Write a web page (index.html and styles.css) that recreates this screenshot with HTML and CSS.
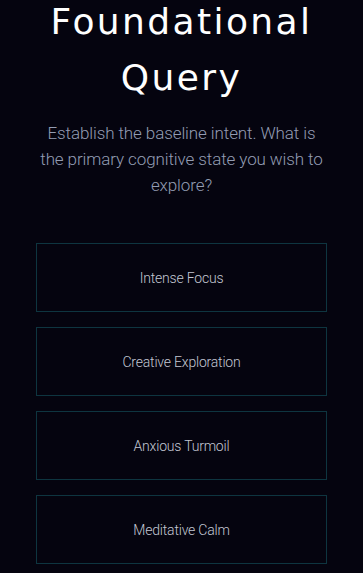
FILE: index.html
```html
<!DOCTYPE html>
<html lang="en">
<head>
  <meta charset="UTF-8">
  <meta name="viewport" content="width=device-width, initial-scale=1.0">
  <title>Foundational Query</title>
  <link rel="stylesheet" href="styles.css">
</head>
<body>
  <div class="query-container">
    <h1 class="query-title">Foundational Query</h1>
    <p class="query-intro">Establish the baseline intent. What is the primary cognitive state you wish to explore?</p>
    <div class="option-list">
      <button class="option-button">Intense Focus</button>
      <button class="option-button">Creative Exploration</button>
      <button class="option-button">Anxious Turmoil</button>
      <button class="option-button">Meditative Calm</button>
    </div>
  </div>
</body>
</html>
```

FILE: styles.css
```css
body {
  margin: 0;
  background-color: #05040f;
  font-family: Roboto, Lato, sans-serif;
  color: #ffffff;
}

.query-container {
  padding: 0 36px;
}

.query-title {
  margin: -6px 0 0;
  font-family: "DejaVu Sans", sans-serif;
  font-weight: normal;
  font-size: 36px;
  letter-spacing: 2.4px;
  line-height: 56px;
  text-align: center;
  color: #ffffff;
}

.query-intro {
  margin: 14px -2px 0;
  font-size: 17px;
  font-weight: 300;
  letter-spacing: -0.1px;
  line-height: 26px;
  text-align: center;
  color: #939cb3;
}

.option-list {
  display: flex;
  flex-direction: column;
  gap: 15px;
  margin-top: 45px;
}

.option-button {
  height: 69px;
  background: transparent;
  border: 1px solid #0e3540;
  color: #c3c7d3;
  font-family: Roboto, sans-serif;
  font-weight: 300;
  font-size: 14px;
  letter-spacing: -0.2px;
  cursor: pointer;
}
```
